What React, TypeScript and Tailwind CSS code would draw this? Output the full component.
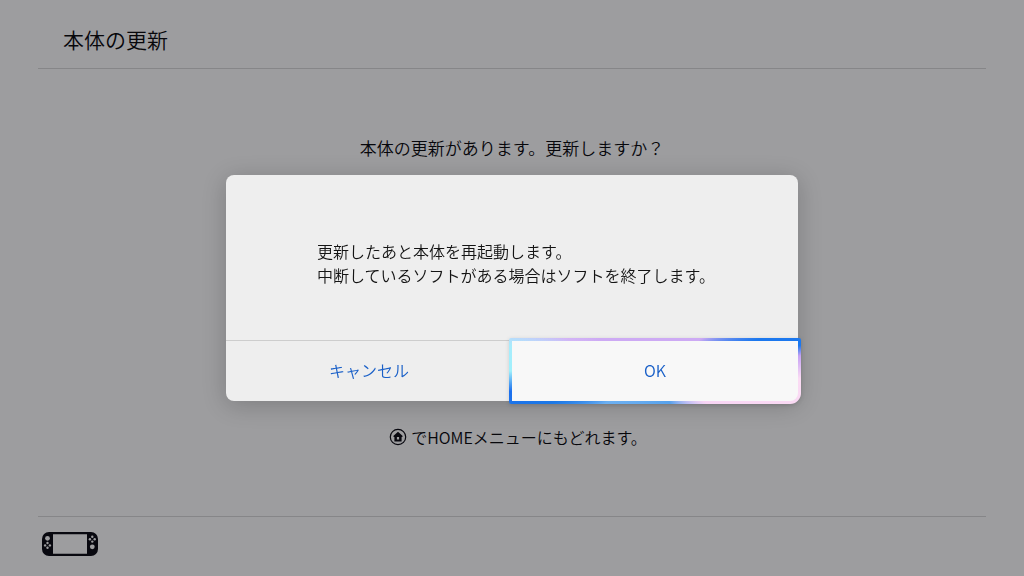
/* ─── Icons ─────────────────────────────────────────────────────────────── */
function ConsoleIcon() {
  return (
    <svg viewBox="0 0 56 24" width="56" height="24" role="img" aria-label="本体">
      <path
        fill="#0a0a12"
        fillRule="evenodd"
        d="M7 0h42a7 7 0 0 1 7 7v10a7 7 0 0 1-7 7H7a7 7 0 0 1-7-7V7a7 7 0 0 1 7-7zM11 2.2v19.6h34V2.2z"
      />
      <g fill="#ebebeb">
        <circle cx="5.5" cy="6.3" r="2.4" />
        <circle cx="50.3" cy="14.8" r="2.4" />
        {/* left direction buttons */}
        <circle cx="5.5" cy="11" r="1.2" />
        <circle cx="3.1" cy="13.4" r="1.2" />
        <circle cx="7.9" cy="13.4" r="1.2" />
        <circle cx="5.5" cy="15.8" r="1.2" />
        {/* right face buttons */}
        <circle cx="50.3" cy="4.8" r="1.2" />
        <circle cx="47.9" cy="7.2" r="1.2" />
        <circle cx="52.7" cy="7.2" r="1.2" />
        <circle cx="50.3" cy="9.6" r="1.2" />
      </g>
    </svg>
  );
}

function HomeIcon() {
  return (
    <svg viewBox="0 0 18 18" width="18" height="18" aria-hidden="true">
      <circle cx="9" cy="9" r="7.7" fill="none" stroke="#0a0a12" strokeWidth="1.2" />
      <path
        fill="#0a0a12"
        fillRule="evenodd"
        d="M9 3.8l4.7 4.3-.5 1h-.6v4.4H5.4V9.1h-.6l-.5-1zM7.9 9v2.4h2.2V9z"
      />
    </svg>
  );
}

/* ─── Update confirmation ───────────────────────────────────────────────── */
function UpdateDialog() {
  return (
    <div className="fixed inset-0 flex items-center justify-center bg-[#06060c]/34">
      <div
        role="dialog"
        aria-modal="true"
        aria-describedby="update-message"
        className="w-[572px] max-w-full rounded-lg bg-[#eeeeee] shadow-[0_4px_24px_rgba(0,0,0,0.2)]"
      >
        <div className="flex h-[166px] items-center justify-center border-b border-[#cdcdcd] pt-2.5 pl-2">
          <p id="update-message" className="text-base leading-6 text-[#141414]">
            更新したあと本体を再起動します。
            <br />
            中断しているソフトがある場合はソフトを終了します。
          </p>
        </div>

        <div className="grid h-[60px] grid-cols-2 text-base text-[#1a60c8]">
          <button type="button" className="rounded-bl-lg pb-0.5">
            キャンセル
          </button>
          {/* focused button, its glowing ring sits outside the cell */}
          <div className="-m-[3px] flex rounded-xs rounded-br-[11px] bg-[conic-gradient(#cdaaf4_0deg,#cdaaf4_55deg,#1c78ee_73deg,#1c78ee_80deg,#c6a2f4_84deg,#fbdcf4_93deg,#f8d4f4_122deg,#c4c0f6_133deg,#57a2ec_155deg,#6cb0f2_237deg,#1c78e6_253deg,#1c70ee_262deg,#a0f0fc_270deg,#a8ecfc_280deg,#bcd6fb_284deg,#d2b4f6_290deg,#cdaaf4_300deg,#cdaaf4_360deg)] p-[3px] shadow-[0_1px_4px_rgba(0,0,0,0.15)]">
            <button type="button" autoFocus className="flex-1 rounded-br-lg bg-[#f8f8f8] pb-0.5 outline-none">
              OK
            </button>
          </div>
        </div>
      </div>
    </div>
  );
}

export default function App() {
  return (
    <div className="flex min-h-screen flex-col bg-[#ebebeb] px-[38px] font-['Noto_Sans_CJK_JP',sans-serif] font-[350] text-[#08080c]">
      <header className="flex h-[69px] items-center border-b border-[#c8c8c8] px-[25px] pt-3">
        <h1 className="text-[21px]">本体の更新</h1>
      </header>

      <main className="flex flex-1 flex-col items-center justify-between py-[67px]">
        <p className="text-[17px] leading-6">本体の更新があります。更新しますか？</p>
        <p className="flex items-center gap-1 pl-3 text-base leading-6">
          <HomeIcon />
          でHOMEメニューにもどれます。
        </p>
      </main>

      <footer className="flex h-[60px] items-center border-t border-[#c8c8c8] px-1 pb-1.5">
        <ConsoleIcon />
      </footer>

      <UpdateDialog />
    </div>
  );
}
